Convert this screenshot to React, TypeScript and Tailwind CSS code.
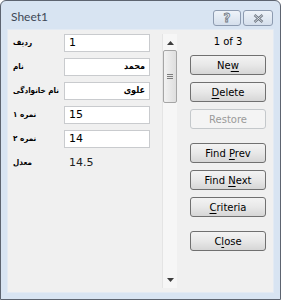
import React from "react";

interface Field {
  label: string;
  value: string;
  rtl?: boolean;
}

// Record fields shown in the form
const fields: Field[] = [
  { label: "ردیف", value: "1" },
  { label: "نام", value: "محمد", rtl: true },
  { label: "نام خانوادگی", value: "علوی", rtl: true },
  { label: "نمره ۱", value: "15" },
  { label: "نمره ۲", value: "14" },
];

// Button label with one underlined access key
const Key: React.FC<{ text: string; at: number }> = ({ text, at }) => (
  <span className="whitespace-pre">
    {text.slice(0, at)}
    <span className="underline underline-offset-2">{text[at]}</span>
    {text.slice(at + 1)}
  </span>
);

const DialogButton: React.FC<{ children: React.ReactNode; disabled?: boolean; className?: string }> = ({
  children,
  disabled,
  className = "",
}) => (
  <div
    className={
      "h-[20px] w-[76px] flex items-center justify-center rounded-[3px] border text-[10px] " +
      (disabled
        ? "border-[#c4c8cb] bg-[#f4f4f4] text-[#9a9a9a] "
        : "border-[#707070] bg-gradient-to-b from-[#f3f3f3] via-[#e8e8e8] to-[#d6d6d6] text-black ") +
      className
    }
  >
    {children}
  </div>
);

const TitleButton: React.FC<{ children: React.ReactNode; className?: string }> = ({ children, className = "" }) => (
  <div
    className={
      "h-[16px] flex items-center justify-center rounded-[3px] border border-[#8d9bb0] bg-gradient-to-b from-[#eef3f9] to-[#d5dfec] " +
      className
    }
  >
    {children}
  </div>
);

export default function App() {
  return (
    <div
      className="w-[281px] h-[300px] flex flex-col rounded-t-[6px] border border-[#5d6470] bg-[#d8e4f2] overflow-hidden"
      style={{ fontFamily: '"DejaVu Sans", sans-serif' }}
    >
      {/* Title bar */}
      <div className="h-[28px] flex items-start pl-[10px] pr-[7px]">
        <span className="mt-[9px] text-[12px] leading-[14px] text-[#3e4756] font-['Lato',sans-serif]">Sheet1</span>
        <div className="ml-auto mt-[9px] flex gap-[2px]">
          <TitleButton className="w-[28px]">
            <span
              className="text-[12px] font-bold leading-none text-[#e9edf2]"
              style={{ WebkitTextStroke: "0.8px #6f7782" }}
            >
              ?
            </span>
          </TitleButton>
          <TitleButton className="w-[30px]">
            <svg width="11" height="9" viewBox="0 0 11 9">
              <path d="M1.5 1 L9.5 8 M9.5 1 L1.5 8" stroke="#6f7782" strokeWidth="2.4" />
              <path d="M1.5 1 L9.5 8 M9.5 1 L1.5 8" stroke="#e9edf2" strokeWidth="0.8" />
            </svg>
          </TitleButton>
        </div>
      </div>

      {/* Client area */}
      <div className="mx-[6px] mb-[6px] flex-1 flex bg-[#f0f0f0] border border-[#e3eaf3]">
        {/* Field list */}
        <div className="pl-[5px] pt-[4px] flex flex-col gap-[6px]">
          {fields.map((f, i) => (
            <div key={i} className="flex items-center h-[18px]">
              <div className="w-[51px] flex">
                <span
                  dir="rtl"
                  className="whitespace-nowrap text-[8px] font-bold text-black font-['DejaVu_Sans_Condensed','DejaVu_Sans',sans-serif]"
                >
                  {f.label}
                </span>
              </div>
              <div
                dir={f.rtl ? "rtl" : "ltr"}
                className={
                  "w-[86px] h-[18px] flex items-center px-[4px] border border-[#c9cbce] bg-white text-black " +
                  (f.rtl ? "font-bold text-[9px] font-['DejaVu_Sans_Condensed','DejaVu_Sans',sans-serif]" : "text-[11px]")
                }
              >
                {f.value}
              </div>
            </div>
          ))}
          <div className="flex items-center h-[18px]">
            <div className="w-[56px] flex">
              <span
                dir="rtl"
                className="whitespace-nowrap text-[8px] font-bold text-black font-['DejaVu_Sans_Condensed','DejaVu_Sans',sans-serif]"
              >
                معدل
              </span>
            </div>
            <span className="text-[11px] text-[#222]">14.5</span>
          </div>
        </div>

        {/* Scroll bar */}
        <div className="ml-[12px] mt-[4px] mb-[4px] w-[15px] flex flex-col items-center bg-[#f6f6f6] border-l border-[#e4e4e4]">
          <svg className="mt-[7px]" width="7" height="4" viewBox="0 0 7 4">
            <path d="M0 4 L3.5 0 L7 4 Z" fill="#3c3c3c" />
          </svg>
          <div className="mt-[5px] h-[53px] w-[14px] rounded-[2px] border border-[#a5a5a5] bg-gradient-to-r from-[#f2f2f2] to-[#dedede] flex flex-col items-center justify-center gap-[1px]">
            <div className="h-px w-[6px] bg-[#7d7d7d]" />
            <div className="h-px w-[6px] bg-[#7d7d7d]" />
            <div className="h-px w-[6px] bg-[#7d7d7d]" />
          </div>
          <svg className="mt-auto mb-[6px]" width="7" height="4" viewBox="0 0 7 4">
            <path d="M0 0 L3.5 4 L7 0 Z" fill="#3c3c3c" />
          </svg>
        </div>

        {/* Buttons */}
        <div className="ml-[13px] pt-[5px] flex flex-col text-[10px]">
          <div className="h-[14px] leading-[14px] text-center text-black">1 of 3</div>
          <DialogButton className="mt-[6px]">
            <Key text="New" at={2} />
          </DialogButton>
          <DialogButton className="mt-[7px]">
            <Key text="Delete" at={0} />
          </DialogButton>
          <DialogButton disabled className="mt-[7px]">
            Restore
          </DialogButton>
          <DialogButton className="mt-[14px]">
            <Key text="Find Prev" at={5} />
          </DialogButton>
          <DialogButton className="mt-[7px]">
            <Key text="Find Next" at={5} />
          </DialogButton>
          <DialogButton className="mt-[7px]">
            <Key text="Criteria" at={0} />
          </DialogButton>
          <DialogButton className="mt-[14px]">
            <Key text="Close" at={1} />
          </DialogButton>
        </div>
      </div>
    </div>
  );
}
